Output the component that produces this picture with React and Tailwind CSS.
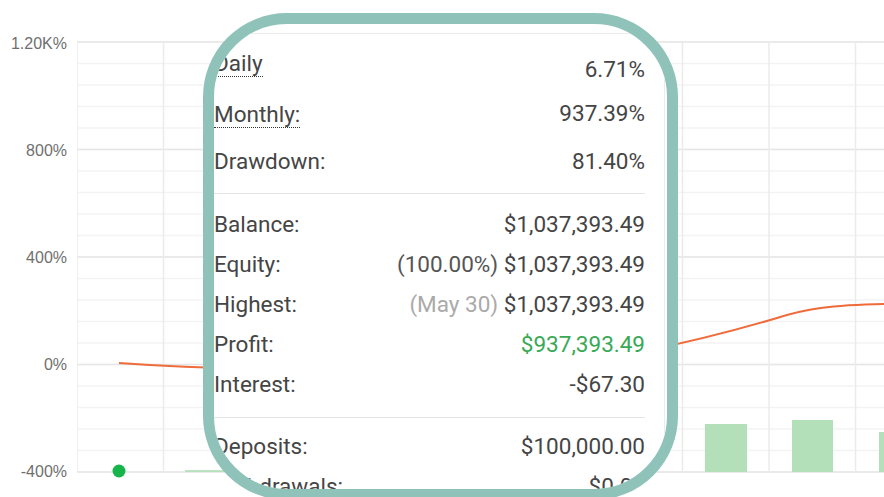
import React from 'react'

const axisLabels = ['1.20K%', '800%', '400%', '0%', '-400%']

const statsTop = [
  { label: 'Daily', value: '6.71%', dotted: true, shift: true },
  { label: 'Monthly:', value: '937.39%', dotted: true },
  { label: 'Drawdown:', value: '81.40%' },
]

const statsMid = [
  { label: 'Balance:', value: '$1,037,393.49' },
  { label: 'Equity:', value: '$1,037,393.49', note: '(100.00%)', noteClass: 'text-[#555]' },
  { label: 'Highest:', value: '$1,037,393.49', note: '(May 30)', noteClass: 'text-[#aaaaaa]' },
  { label: 'Profit:', value: '$937,393.49', valueClass: 'text-[#38a956]' },
  { label: 'Interest:', value: '-$67.30' },
]

const statsBottom = [
  { label: 'Deposits:', value: '$100,000.00' },
  { label: 'Withdrawals:', value: '$0.00' },
]

function Chart() {
  const majors = [42, 149.5, 257, 364.5, 472]
  const minors = []
  for (let i = 0; i <= 20; i++) minors.push(42 + i * 21.5)
  const verticals = []
  for (let i = 0; i < 10; i++) verticals.push(77 + i * 86.5)

  return (
    <svg className="flex-1" width="807" height="497" viewBox="77 0 807 497">
      {minors.map((y) => (
        <line key={'m' + y} x1="77" x2="884" y1={y} y2={y} stroke="#f3f3f3" strokeWidth="1.5" />
      ))}
      {majors.map((y) => (
        <line key={'M' + y} x1="77" x2="884" y1={y} y2={y} stroke="#e6e6e6" strokeWidth="1.5" />
      ))}
      {verticals.map((x) => (
        <line key={'v' + x} x1={x} x2={x} y1="42" y2="472" stroke="#ebebeb" strokeWidth="1.5" />
      ))}

      {/* deposit bars */}
      <rect x="705" y="424" width="42" height="48" fill="#b3e0b9" />
      <rect x="792" y="420" width="41" height="52" fill="#b3e0b9" />
      <rect x="879" y="432" width="42" height="40" fill="#b3e0b9" />
      <line x1="185" x2="240" y1="471" y2="471" stroke="#a9dcaf" strokeWidth="1.5" />

      {/* growth line */}
      <path
        d="M119 363 C 160 366, 200 368, 260 369 L 640 352 C 690 342, 730 332, 777 318 C 805 309, 830 305, 884 304"
        fill="none"
        stroke="#ef6b3a"
        strokeWidth="2"
      />
      <circle cx="119" cy="471" r="6.5" fill="#17b449" />
    </svg>
  )
}

function Row({ item }) {
  return (
    <div className="h-[40px] flex items-center justify-between">
      <span
        className={
          item.dotted
            ? 'border-b border-dotted border-[#333] leading-[26px]' + (item.shift ? ' mb-[6px]' : '')
            : ''
        }
      >
        {item.label}
      </span>
      <span className={item.shift ? 'mt-[8px]' : ''}>
        {item.note && <span className={item.noteClass}>{item.note} </span>}
        <span className={item.valueClass}>{item.value}</span>
      </span>
    </div>
  )
}

export default function App() {
  return (
    <div className="relative w-[884px] h-[497px] overflow-hidden bg-white flex">
      {/* Y axis */}
      <div className="w-[77px] h-[482px] pt-[34px] pr-[10px] flex flex-col justify-between text-right text-[16px] text-[#6f6f6f] font-['Liberation_Sans',Arial,sans-serif]">
        {axisLabels.map((l) => (
          <div key={l} className="h-[20px] leading-[20px]">
            {l}
          </div>
        ))}
      </div>

      <Chart />

      {/* Tooltip with highlight */}
      <div className="absolute left-[203px] top-[13px] w-[475px] h-[487px] rounded-[84px] border-[11px] border-[#8fc3ba] bg-white overflow-hidden">
        <div className="mt-[9px] mr-[2px] h-full border-t border-r border-[#ececec] pr-[19px] text-[22.5px] text-[#454545] font-['Roboto',sans-serif]">
          <div className="pt-[8px]">
            {statsTop.map((s) => (
              <div key={s.label} className="h-[48px] flex items-center justify-between">
                <span
                  className={
                    s.dotted
                      ? 'border-b border-dotted border-[#333] leading-[26px]' + (s.shift ? ' mb-[6px]' : '')
                      : ''
                  }
                >
                  {s.label}
                </span>
                <span className={s.shift ? 'mt-[8px]' : ''}>{s.value}</span>
              </div>
            ))}
          </div>
          <div className="mt-[7px] border-t border-[#e4e4e4] pt-[11px]">
            {statsMid.map((s) => (
              <Row key={s.label} item={s} />
            ))}
          </div>
          <div className="mt-[12px] border-t border-[#e4e4e4] pt-[9px]">
            {statsBottom.map((s) => (
              <Row key={s.label} item={s} />
            ))}
          </div>
        </div>
      </div>
    </div>
  )
}
